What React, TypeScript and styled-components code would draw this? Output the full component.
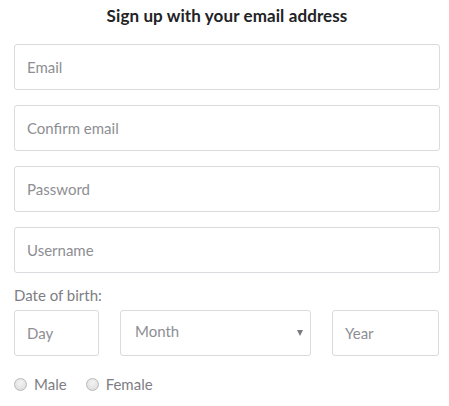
import React from 'react';
import styled, { createGlobalStyle } from 'styled-components';

const GlobalStyle = createGlobalStyle`
  html, body {
    margin: 0;
    padding: 0;
    background: #ffffff;
    font-family: "Lato", "Open Sans", "Liberation Sans", sans-serif;
  }
`;

//#region styles
const Form = styled.form`
  width: 426px;
  padding: 6px 0 0 14px;
  display: flex;
  flex-direction: column;
`;

const Title = styled.h2`
  margin: 0 0 18px;
  text-align: center;
  font-size: 17px;
  line-height: 20px;
  font-weight: 700;
  color: #222326;
  letter-spacing: 0.1px;
`;

const Fields = styled.div`
  display: flex;
  flex-direction: column;
  gap: 15px;
`;

const TextInput = styled.input<{ $width?: number }>`
  box-sizing: border-box;
  width: ${p => (p.$width ? `${p.$width}px` : '100%')};
  height: 46px;
  padding: 0 12px;
  border: 1px solid #dadadf;
  border-radius: 3px;
  background: #fff;
  font-family: inherit;
  font-size: 15px;
  color: #333;
  outline: none;

  &::placeholder {
    color: #8e8e93;
  }
`;

const Label = styled.div`
  margin: 13px 0 6px;
  font-size: 15px;
  line-height: 18px;
  color: #7e7e84;
`;

const DateRow = styled.div`
  display: flex;
  gap: 21px;
`;

const SelectBox = styled.div`
  position: relative;
  box-sizing: border-box;
  width: 191px;
  height: 46px;
  border: 1px solid #dadadf;
  border-radius: 3px;
  display: flex;
  align-items: center;
  padding: 0 12px 4px 14px;
  font-size: 15px;
  color: #8e8e93;
`;

const Caret = styled.span`
  position: absolute;
  right: 7px;
  top: 19px;
  width: 0;
  height: 0;
  border-left: 3px solid transparent;
  border-right: 3px solid transparent;
  border-top: 6px solid #7a7a80;
`;

const RadioRow = styled.div`
  display: flex;
  align-items: center;
  gap: 19px;
  margin-top: 19px;
`;

const RadioLabel = styled.label`
  display: flex;
  align-items: center;
  gap: 7px;
  font-size: 15px;
  color: #7e7e84;
`;

const RadioDot = styled.span`
  box-sizing: border-box;
  width: 13px;
  height: 13px;
  border-radius: 50%;
  border: 1px solid #b9b9bd;
  background: radial-gradient(circle at 50% 35%, #f4f4f4, #d8d8da);
`;
//#endregion

const App: React.FC = () => {
  return (
    <>
      <GlobalStyle />
      <Form onSubmit={e => e.preventDefault()}>
        <Title>Sign up with your email address</Title>
        <Fields>
          <TextInput placeholder="Email" />
          <TextInput placeholder="Confirm email" />
          <TextInput placeholder="Password" type="password" />
          <TextInput placeholder="Username" />
        </Fields>
        <Label>Date of birth:</Label>
        <DateRow>
          <TextInput placeholder="Day" $width={85} />
          <SelectBox>
            Month
            <Caret />
          </SelectBox>
          <TextInput placeholder="Year" $width={107} />
        </DateRow>
        <RadioRow>
          <RadioLabel><RadioDot />Male</RadioLabel>
          <RadioLabel><RadioDot />Female</RadioLabel>
        </RadioRow>
      </Form>
    </>
  );
};

export default App;
